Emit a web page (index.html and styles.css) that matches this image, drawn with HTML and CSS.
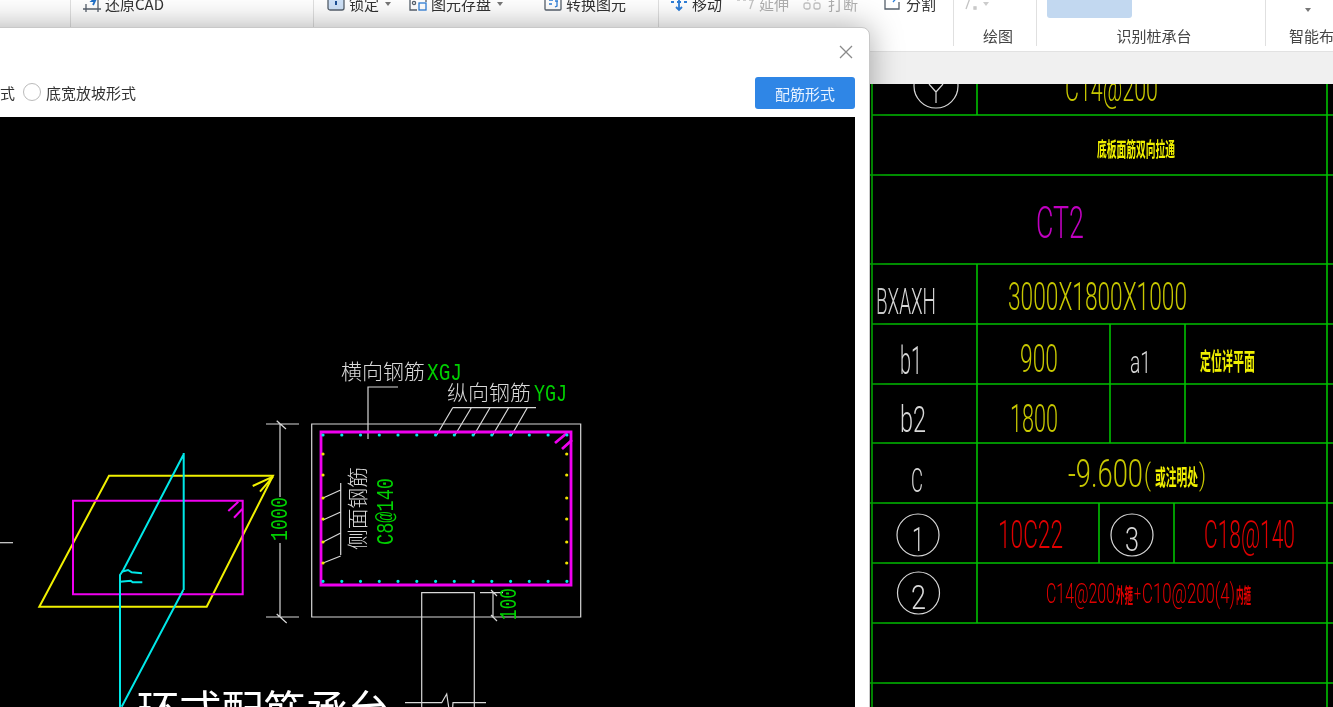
FILE: index.html
```html
<!DOCTYPE html>
<html lang="zh">
<head>
<meta charset="utf-8">
<title>配筋形式</title>
<link rel="stylesheet" href="styles.css">
</head>
<body>
<div class="page">
  <header class="ribbon">
    <section class="group g1"></section>
    <section class="group g2">
      <div class="tools">
        <span class="tool"><svg class="ico" viewBox="0 0 18 18"><path class="st-dark" d="M0 15h18M3 10v8M15 2v16"/><path class="st-navyb" d="M14 3 9 7h3l-2 4"/></svg>还原CAD</span>
      </div>
      <div class="glabel peek p2">通用操作</div>
    </section>
    <section class="group g3">
      <div class="tools">
        <span class="tool t-lock"><svg class="ico" viewBox="0 0 18 18"><rect class="fill-blue" x="1" y="1" width="16" height="15" rx="2"/><path class="st-navy" d="M9 7v4"/></svg>锁定<i class="caret"></i></span>
        <span class="tool t-store"><svg class="ico" viewBox="0 0 18 18"><path class="st-dark" d="M1 1h11v2h5v5M1 1v15h7"/><circle class="st-dark" cx="5" cy="9" r="1.6"/><rect class="st-blue" x="10" y="9" width="7" height="7"/></svg>图元存盘<i class="caret"></i></span>
        <span class="tool t-conv"><svg class="ico" viewBox="0 0 18 18"><rect class="st-dark" x="1" y="1" width="16" height="15" rx="1"/><path class="st-blue" d="M5 6h4M5 10h3M11 7h3M13 7v5l-2 1"/></svg>转换图元</span>
      </div>
      <div class="glabel peek p3">图元操作</div>
    </section>
    <section class="group g4">
      <div class="tools">
        <span class="tool t-move"><svg class="ico" viewBox="0 0 18 18"><path class="st-blue2" d="M9 2v14M6 13l3 3 3-3M1 8h3M7 8h4M14 8h3"/></svg>移动</span>
        <span class="tool off t-ext"><svg class="ico" viewBox="0 0 18 18"><path class="st-gray" d="M0 6h3M6 6h3M12 6h5M17 3l-4 12"/></svg>延伸</span>
        <span class="tool off t-brk"><svg class="ico" viewBox="0 0 18 18"><path class="st-gray" d="M4 2l1 5M13 2l-1 5"/><rect class="st-gray" x="1" y="9" width="6" height="6" rx="2"/><rect class="st-gray" x="11" y="9" width="6" height="6" rx="2"/></svg>打断</span>
        <span class="tool t-cut"><svg class="ico" viewBox="0 0 18 18"><path class="st-dark" d="M8 5H1v10h14V8"/><path class="st-blue" d="M16 0 9 8"/></svg>分割</span>
      </div>
      <div class="glabel peek p4">修改</div>
    </section>
    <section class="group g5">
      <div class="tools"><span class="tool off t-draw"><svg class="ico-sm" viewBox="0 0 14 14"><path class="st-gray" d="M1 1h6L3 12M11 10h2v2h-2z"/></svg><i class="caret pale"></i></span></div>
      <div class="glabel p5">绘图</div>
    </section>
    <section class="group g6">
      <div class="swatch"></div>
      <div class="glabel p6">识别桩承台</div>
    </section>
    <section class="group g7">
      <div class="drop"><i class="caret"></i></div>
      <div class="glabel left">智能布置</div>
    </section>
  </header>
  <div class="tabbar"></div>
  <main class="cad">
    <svg class="sheet" viewBox="870 84 463 623" aria-label="CAD">
      <g class="grid">
        <path d="M872 84V707M1327 84V707"/>
        <path d="M872 115H1333M870 175H1333M870 264H1333M872 324H1333M872 384H1333M872 443H1333M870 503H1333M872 563H1333M872 623H1333M870 683H1333"/>
        <path d="M977 84V115M977 264V623M1110 324V443M1185 324V443M1099 503V563M1174 503V563"/>
      </g>
      <g class="ring">
        <circle cx="936" cy="86" r="22"/><path d="M929 84l7 8 7-8M936 92v11"/>
        <circle cx="918" cy="535" r="21"/><circle cx="1132" cy="535" r="21"/><circle cx="918.500" cy="593" r="21"/>
      </g>
      <g class="cadtext">
        <text class="c-olive" x="1065" y="101" font-size="36" textLength="93" lengthAdjust="spacingAndGlyphs">C14@200</text>
        <text class="c-yellow cjk" x="1097" y="157" font-size="20" textLength="78" lengthAdjust="spacingAndGlyphs">底板面筋双向拉通</text>
        <text class="c-purple" x="1036" y="238" font-size="44" textLength="48" lengthAdjust="spacingAndGlyphs">CT2</text>
        <text class="c-white" x="876" y="314" font-size="36" textLength="60" lengthAdjust="spacingAndGlyphs">BXAXH</text>
        <text class="c-olive" x="1008" y="310" font-size="38" textLength="179" lengthAdjust="spacingAndGlyphs">3000X1800X1000</text>
        <text class="c-white" x="900" y="374" font-size="38" textLength="22" lengthAdjust="spacingAndGlyphs">b1</text>
        <text class="c-olive" x="1020" y="372" font-size="38" textLength="38" lengthAdjust="spacingAndGlyphs">900</text>
        <text class="c-white" x="1130" y="373" font-size="32" textLength="21" lengthAdjust="spacingAndGlyphs">a1</text>
        <text class="c-yellow cjk" x="1200" y="370" font-size="24" textLength="55" lengthAdjust="spacingAndGlyphs">定位详平面</text>
        <text class="c-white" x="900" y="432" font-size="36" textLength="26" lengthAdjust="spacingAndGlyphs">b2</text>
        <text class="c-olive" x="1010" y="432" font-size="38" textLength="48" lengthAdjust="spacingAndGlyphs">1800</text>
        <text class="c-white" x="911" y="492" font-size="34" textLength="12" lengthAdjust="spacingAndGlyphs">C</text>
        <text class="c-olive" x="1068" y="487" font-size="38" textLength="75" lengthAdjust="spacingAndGlyphs">-9.600</text>
        <text class="c-olive" x="1144" y="485" font-size="30" textLength="7" lengthAdjust="spacingAndGlyphs">(</text>
        <text class="c-yellow cjk" x="1155" y="485" font-size="22" textLength="43" lengthAdjust="spacingAndGlyphs">或注明处</text>
        <text class="c-olive" x="1199" y="485" font-size="30" textLength="7" lengthAdjust="spacingAndGlyphs">)</text>
        <text class="c-white" x="912" y="551" font-size="34" textLength="12" lengthAdjust="spacingAndGlyphs">1</text>
        <text class="c-white" x="1125" y="551" font-size="34" textLength="14" lengthAdjust="spacingAndGlyphs">3</text>
        <text class="c-white" x="911" y="609" font-size="34" textLength="15" lengthAdjust="spacingAndGlyphs">2</text>
        <text class="c-red" x="998" y="548" font-size="38" textLength="65" lengthAdjust="spacingAndGlyphs">10C22</text>
        <text class="c-red" x="1204" y="548" font-size="38" textLength="91" lengthAdjust="spacingAndGlyphs">C18@140</text>
        <text class="c-red" x="1046" y="603" font-size="28" textLength="69" lengthAdjust="spacingAndGlyphs">C14@200</text>
        <text class="c-red cjk" x="1116" y="603" font-size="20" textLength="17" lengthAdjust="spacingAndGlyphs">外箍</text>
        <text class="c-red" x="1134" y="601" font-size="22" textLength="7" lengthAdjust="spacingAndGlyphs">+</text>
        <text class="c-red" x="1142" y="603" font-size="28" textLength="93" lengthAdjust="spacingAndGlyphs">C10@200(4)</text>
        <text class="c-red cjk" x="1236" y="603" font-size="20" textLength="15" lengthAdjust="spacingAndGlyphs">内箍</text>
        <text class="c-white" x="1331" y="316" font-size="30">I</text>
      </g>
    </svg>
  </main>

  <aside class="dialog">
    <button class="close" aria-label="关闭"><svg viewBox="0 0 14 14"><path d="M1 1l12 12M13 1 1 13"/></svg></button>
    <div class="options">
      <span class="opt-text">放坡形式</span>
      <label class="radio"><i class="dot"></i>底宽放坡形式</label>
      <button class="primary">配筋形式</button>
    </div>
    <svg class="drawing" viewBox="-60 117 915 590" aria-label="环式配筋承台">
      <g class="wh">
        <path d="M0 542.700H13"/>
        <path d="M311.700 424H580.700V617H311.700Z"/>
        <path d="M368 439V387H398"/>
        <path d="M452.700 407.700H536M452.700 407.700 436.700 435M471.300 407.700 455 435M490 407.700 474 435M508.700 407.700 492.700 435M527.300 407.700 511.700 435"/>
        <path d="M340.700 483V555M323 498 340.700 490M323 520 340.700 512M323 542 340.700 533M323 563 340.700 556"/>
        <path d="M280 424V497M280 543V617M266 424H299M266 617H299M276.700 420.700 286 429M276.700 614 286.700 623"/>
        <path d="M421.700 707V592.700H474.300V707"/>
        <path d="M480 592.700H503M493 592.700V617.700M491 590 497 596M491 615 497 621"/>
        <path d="M405 702.700H441.700L446.700 694 448.700 707M452.700 707 453 702.700H486"/>
      </g>
      <g class="yl">
        <path d="M109 475.700H273L206.700 606.700H39.300Z"/>
        <path d="M252.700 486 273 476.700M260 491.700 273 476.700"/>
      </g>
      <g class="mg">
        <path d="M73 500.700H242.700V594.300H73Z"/>
        <path d="M228.300 511 238.300 501.700M234 517.700 242.300 509"/>
        <path class="thick" d="M321 432H571V585H321Z"/>
        <path class="thick" d="M555 443 567 433M562 449 572 440"/>
      </g>
      <g class="cy">
        <path d="M183.700 453V590M183.300 455 123.300 570 120 575V707M183.300 590 121.700 706.700"/>
        <path d="M121.700 571.700 128 570 131.700 572.300 142 573.300M120 581.700 130.700 580.700 132.700 582.300 142.300 582.300"/>
      </g>
      <g class="dots-c">
        <path d="M323 435h.01M341.800 435h.01M360.500 435h.01M379.300 435h.01M398 435h.01M416.800 435h.01M435.600 435h.01M454.300 435h.01M473.100 435h.01M491.800 435h.01M510.600 435h.01M529.300 435h.01M548.100 435h.01M566.900 435h.01"/>
        <path d="M323 581.300h.01M341.800 581.300h.01M360.500 581.300h.01M379.300 581.300h.01M398 581.300h.01M416.800 581.300h.01M435.600 581.300h.01M454.300 581.300h.01M473.100 581.300h.01M491.800 581.300h.01M510.600 581.300h.01M529.300 581.300h.01M548.100 581.300h.01M566.900 581.300h.01"/>
      </g>
      <path class="dots-y" d="M323 454h.01M323 475h.01M323 498h.01M323 519h.01M323 542h.01M323 563h.01M566.700 454h.01M566.700 475h.01M566.700 498h.01M566.700 519h.01M566.700 542h.01M566.700 563h.01"/>
      <g class="draw-text">
        <text class="t-w" x="341" y="379" font-size="21" textLength="84" lengthAdjust="spacingAndGlyphs">横向钢筋</text>
        <text class="t-g" x="427" y="380" font-size="24" textLength="35" lengthAdjust="spacingAndGlyphs">XGJ</text>
        <text class="t-w" x="447" y="400" font-size="21" textLength="84" lengthAdjust="spacingAndGlyphs">纵向钢筋</text>
        <text class="t-g" x="534" y="401" font-size="24" textLength="33" lengthAdjust="spacingAndGlyphs">YGJ</text>
        <text class="t-w" transform="translate(365 550) rotate(-90)" font-size="21" textLength="83" lengthAdjust="spacingAndGlyphs">侧面钢筋</text>
        <text class="t-g" transform="translate(393 545) rotate(-90)" font-size="24" textLength="67" lengthAdjust="spacingAndGlyphs">C8@140</text>
        <text class="t-g" transform="translate(287 541) rotate(-90)" font-size="24" textLength="44" lengthAdjust="spacingAndGlyphs">1000</text>
        <text class="t-g" transform="translate(516 620) rotate(-90)" font-size="24" textLength="32" lengthAdjust="spacingAndGlyphs">100</text>
        <text class="t-title" x="137" y="726" font-size="42" textLength="253" lengthAdjust="spacingAndGlyphs">环式配筋承台</text>
      </g>
    </svg>
  </aside>
</div>
</body>
</html>
```

FILE: styles.css
```css
* { box-sizing: border-box; }
html, body { margin: 0; padding: 0; height: 100%; overflow: hidden; background: #fff; }
.page {
  position: relative;
  width: 1333px;
  height: 707px;
  overflow: hidden;
  display: flex;
  flex-direction: column;
  font-family: "Noto Sans CJK SC", "Liberation Sans", sans-serif;
  filter: blur(0.4px);
}

/* ribbon */
.ribbon { display: flex; height: 52px; flex: none; background: #fff; border-bottom: 1px solid #e2e2e2; overflow: hidden; }
.group { display: flex; flex-direction: column; justify-content: space-between; height: 46px; border-right: 1px solid #e0e0e0; flex: none; }
.g1 { width: 71px; }
.g2 { width: 243px; }
.g3 { width: 345px; }
.g4 { width: 295px; }
.g5 { width: 83px; }
.g6 { width: 229px; }
.g7 { flex: 1; border-right: 0; }
.tools { display: flex; height: 18px; margin-top: -5px; align-items: center; }
.tool { display: inline-flex; align-items: center; font-size: 15px; line-height: 18px; color: #333; white-space: nowrap; }
.tool.off { color: #b0b0b0; }
.ico { width: 18px; height: 18px; margin: 0 4px 2px 0; flex: none; }
.ico-sm { width: 14px; height: 14px; flex: none; }
.g2 .tools { padding-left: 12px; }
.g3 .tools { padding-left: 13px; }
.t-store { margin-left: 18px; }
.t-conv { margin-left: 41px; }
.g4 .tools { padding-left: 11px; }
.t-ext { margin-left: 15px; }
.t-brk { margin-left: 14px; }
.t-brk .ico { margin-right: 7px; }
.t-cut { margin-left: 26px; }
.t-draw { margin-left: 9px; }
.caret { display: inline-block; width: 0; height: 0; margin-left: 6px; border: 3px solid transparent; border-top: 4px solid #777; border-bottom: 0; }
.caret.pale { border-top-color: #ccc; }
.glabel { font-size: 15px; line-height: 20px; height: 20px; margin-bottom: 0; text-align: center; color: #444; white-space: nowrap; }
.glabel.left { text-align: left; padding-left: 23px; }
.peek { margin-bottom: 2px; }
.p2 { padding-right: 22px; }
.p3 { padding-right: 24px; }
.p4 { padding-right: 20px; }
.p5 { padding-left: 6px; }
.p6 { padding-left: 6px; }
.swatch { width: 85px; height: 18px; margin-left: 10px; background: #c2d8f0; border-radius: 0 0 3px 3px; }
.drop { display: flex; padding: 8px 0 0 39px; height: 18px; }
.drop .caret { margin-left: 0; }

.st-dark, .st-blue, .st-gray, .st-navy, .st-navyb, .st-blue2 { fill: none; stroke-width: 1.3; }
.st-dark { stroke: #56606c; }
.st-blue { stroke: #2f7fd8; }
.st-blue2 { stroke: #2f7fd8; stroke-width: 1.8; }
.st-navyb { stroke: #2070c8; stroke-width: 1.8; }
.st-gray { stroke: #c4c4c4; }
.st-navy { stroke: #1c4f94; stroke-width: 2; }
.fill-blue { fill: #cfe2f8; stroke: #56606c; stroke-width: 1.3; }

.tabbar { height: 32px; flex: none; background: #f0f0f0; }

/* CAD sheet */
.cad { flex: 1; min-height: 0; background: #000; display: flex; justify-content: flex-end; }
.sheet { width: 463px; height: 623px; display: block; flex: none; }
.grid path { fill: none; stroke: #00c000; stroke-width: 1.6; }
.ring circle, .ring path { fill: none; stroke: #d8d8d8; stroke-width: 1.2; }
.cadtext text { font-family: Roboto, "Liberation Sans", sans-serif; font-weight: 300; }
.cadtext .cjk { font-family: "Noto Sans CJK SC", sans-serif; font-weight: 700; }
.c-olive { fill: #c8c800; }
.c-yellow { fill: #f0f000; }
.c-purple { fill: #c000c0; }
.c-white { fill: #d8d8d8; }
.c-red { fill: #e00000; }

/* dialog */
.dialog {
  position: absolute;
  left: -61px;
  top: 27px;
  width: 931px;
  height: 700px;
  display: flex;
  flex-direction: column;
  background: #fff;
  border-radius: 8px;
  border: 1px solid #c8c8c8;
  box-shadow: 0 0 32px rgba(0, 0, 0, 0.34);
}
.close { position: absolute; top: 17px; right: 16px; width: 14px; height: 14px; padding: 0; border: 0; background: none; display: block; }
.close svg { display: block; width: 14px; height: 14px; }
.close path { fill: none; stroke: #8a8a8a; stroke-width: 1.3; }
.options { display: flex; align-items: center; height: 32px; margin: 49px 14px 8px 0; font-size: 15px; color: #333; }
.opt-text { width: 75px; flex: none; text-align: right; white-space: nowrap; margin-top: -2px; }
.radio { display: flex; align-items: center; margin: -2px 0 0 8px; white-space: nowrap; }
.dot { width: 18px; height: 18px; margin-right: 5px; border: 1.5px solid #bbb; border-radius: 50%; background: #fff; flex: none; }
.primary { margin-left: auto; width: 100px; height: 32px; padding: 0; border: 0; border-radius: 3px; background: #2f86e6; color: #e8f2ff; font: inherit; }
.drawing { display: block; width: 915px; height: 590px; flex: none; background: #000; }
.wh path { fill: none; stroke: #d8d8d8; stroke-width: 1.2; }
.yl path { fill: none; stroke: #f0f000; stroke-width: 2; }
.mg path { fill: none; stroke: #f000f0; stroke-width: 2; }
.mg .thick { stroke-width: 2.8; }
.cy path { fill: none; stroke: #00e8e8; stroke-width: 2; }
.dots-c path { fill: none; stroke: #00e8e8; stroke-width: 3.2; stroke-linecap: round; }
.dots-y { fill: none; stroke: #f0e000; stroke-width: 3.2; stroke-linecap: round; }
.t-w { fill: #d8d8d8; font-family: "Noto Sans CJK SC", sans-serif; font-weight: 300; }
.t-g { fill: #00d000; font-family: "Liberation Mono", monospace; }
.t-title { fill: #fff; font-family: "Noto Sans CJK SC", sans-serif; }
```
